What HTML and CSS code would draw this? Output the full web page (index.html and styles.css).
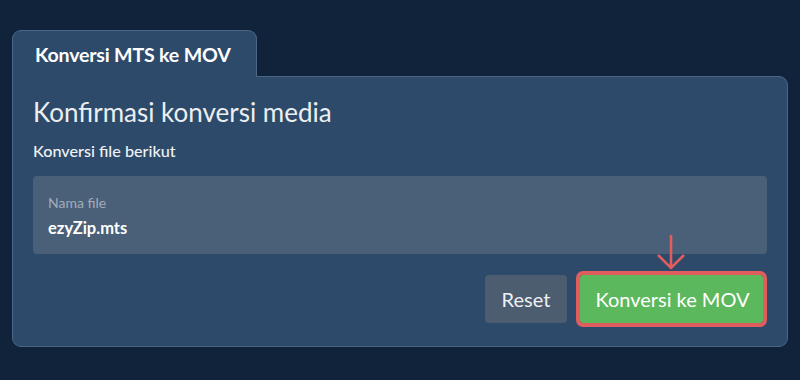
FILE: index.html
```html
<!DOCTYPE html>
<html lang="id">
<head>
<meta charset="utf-8">
<link rel="stylesheet" href="styles.css">
</head>
<body>
<div class="wrap">
  <div class="tab">Konversi MTS ke MOV</div>
  <div class="panel">
    <h1 class="title">Konfirmasi konversi media</h1>
    <p class="sub">Konversi file berikut</p>
    <div class="field">
      <div class="label">Nama file</div>
      <div class="value">ezyZip.mts</div>
    </div>
    <div class="actions">
      <button class="btn reset">Reset</button>
      <div class="convert-wrap">
        <svg class="arrow" width="30" height="36" viewBox="0 0 30 36">
          <path d="M15 1 V34 M2 21 L15 34 L28 21" fill="none" stroke="#e05d5d" stroke-width="2.6"/>
        </svg>
        <button class="btn convert">Konversi ke MOV</button>
      </div>
    </div>
  </div>
</div>
</body>
</html>
```
FILE: styles.css
```css
html, body {
  margin: 0;
  padding: 0;
  background: #10233a;
  font-family: Lato, "Open Sans", sans-serif;
  color: #e9ecef;
}
.wrap {
  padding: 30px 12px 0 12px;
  width: 776px;
}
.tab {
  position: relative;
  z-index: 1;
  display: inline-block;
  box-sizing: border-box;
  width: 245px;
  height: 47px;
  margin-bottom: -1px;
  padding: 12px 0 0 22px;
  background: #2d4a6a;
  border: 1px solid #4b6788;
  border-bottom: none;
  border-radius: 9px 9px 0 0;
  font-size: 19.6px;
  line-height: 24px;
  font-weight: 700;
  color: #ffffff;
  letter-spacing: -0.2px;
}
.panel {
  box-sizing: border-box;
  height: 271px;
  background: #2d4a6a;
  border: 1px solid #4b6788;
  border-radius: 0 9px 9px 9px;
  padding: 20px 20px 0 20px;
}
.title {
  margin: 0;
  font-size: 26px;
  font-weight: 400;
  line-height: 30px;
  color: #eceef0;
}
.sub {
  margin: 15px 0 0 0;
  font-size: 16.2px;
  font-weight: 500;
  line-height: 18px;
  color: #f0f2f4;
}
.field {
  margin-top: 16px;
  height: 78px;
  box-sizing: border-box;
  background: #4a5f78;
  border-radius: 4px;
  padding: 19px 15px 0 15px;
}
.label {
  font-size: 14px;
  line-height: 16px;
  color: #a2adbb;
}
.value {
  margin-top: 7px;
  font-size: 16.5px;
  font-weight: 700;
  line-height: 20px;
  color: #ffffff;
}
.actions {
  display: flex;
  justify-content: flex-end;
  align-items: center;
  gap: 13px;
  margin-top: 21px;
}
.btn {
  font-family: Lato, "Open Sans", sans-serif;
  font-size: 20px;
  height: 48px;
  border: none;
  border-radius: 4px;
  color: #ffffff;
  cursor: pointer;
}
.reset {
  width: 82px;
  background: #4c5d70;
  color: #eef0f2;
}
.convert-wrap {
  position: relative;
}
.convert {
  display: block;
  width: 183px;
  background: #5cb85c;
  outline: 4px solid #e05d5d;
  border-radius: 3px;
  margin-right: 4px;
  padding-left: 8px;
}
.arrow {
  position: absolute;
  left: 76px;
  top: -41px;
}
```
